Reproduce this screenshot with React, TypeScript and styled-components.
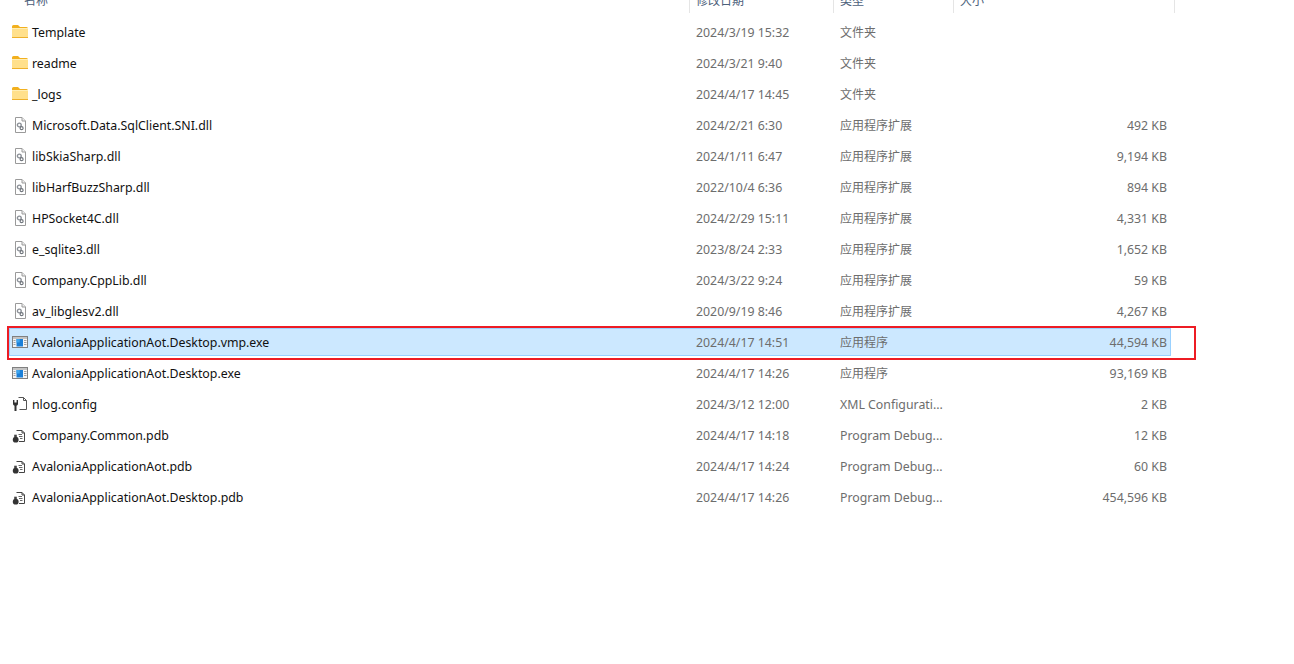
import React from "react";
import styled, { createGlobalStyle } from "styled-components";

const Global = createGlobalStyle`
  html, body { margin: 0; padding: 0; background: #fff; }
  body { font-family: "Noto Sans", "Noto Sans CJK SC", sans-serif; font-size: 12.33px; }
`;

const Page = styled.div`
  position: relative;
  width: 1294px;
  height: 664px;
  overflow: hidden;
  background: #fff;
`;

const Header = styled.div`
  display: flex;
  height: 13px;
  overflow: hidden;
  align-items: flex-end;
`;

const HeaderCell = styled.div<{ $w: number; $pad?: number; $sep?: boolean }>`
  width: ${(p) => p.$w}px;
  height: 13px;
  flex: none;
  box-sizing: border-box;
  padding-left: ${(p) => p.$pad ?? 6}px;
  border-right: ${(p) => (p.$sep ? "1px solid #e5e5e5" : "none")};
  display: flex;
  align-items: flex-end;
  overflow: hidden;
  color: #4c607a;
  font-family: "Noto Sans CJK SC", sans-serif;
  font-size: 12px;
  line-height: 18px;
  & > span { display: block; padding-bottom: 4px; flex: none; }
`;

const List = styled.div`
  display: flex;
  flex-direction: column;
  gap: 3px;
  padding: 5px 0 0 9px;
  width: 1162px;
`;

const Row = styled.div<{ $sel?: boolean }>`
  display: grid;
  grid-template-columns: 680px 144px 240px 1fr;
  align-items: center;
  height: 28px;
  box-sizing: border-box;
  border: 1px solid ${(p) => (p.$sel ? "#99d1ff" : "transparent")};
  background: ${(p) => (p.$sel ? "#cce8ff" : "transparent")};
  color: #6d6d6d;
`;

const NameCell = styled.div`
  display: flex;
  align-items: center;
  padding-left: 2px;
  color: #111;
  white-space: nowrap;
`;

const IconBox = styled.span`
  width: 16px;
  height: 16px;
  flex: none;
  margin-right: 4px;
  display: block;
  & > svg { display: block; }
`;

const TextCell = styled.div<{ $cjk?: boolean }>`
  padding-left: 6px;
  white-space: nowrap;
  overflow: hidden;
  font-size: ${(p) => (p.$cjk ? "12px" : "inherit")};
`;

const SizeCell = styled.div`
  text-align: right;
  padding-right: 3px;
  white-space: nowrap;
`;

const Highlight = styled.div`
  position: absolute;
  left: 7px;
  top: 326px;
  width: 1189px;
  height: 34px;
  box-sizing: border-box;
  border: 2px solid #ed1c24;
  pointer-events: none;
`;

const Svg = ({ children }: { children: React.ReactNode }) => (
  <svg width="16" height="16" viewBox="0 0 16 16">{children}</svg>
);

const FolderIcon = () => (
  <Svg>
    <path d="M0 2.5 Q0 1 1.5 1 H6 L8 3 H14.5 Q16 3 16 4.5 V6 H0Z" fill="#f2b01e" />
    <path d="M0 4.5 H16 V13 Q16 14 15 14 H1 Q0 14 0 13Z" fill="#ffe08c" />
    <rect x="0" y="13" width="16" height="1" fill="#eeb02c" />
    <rect x="0" y="4" width="16" height="1" fill="#ffeeb5" />
  </Svg>
);

const DllIcon = () => (
  <Svg>
    <path d="M3.5 .5 H10 L13.5 4 V15.5 H3.5Z" fill="#fff" stroke="#9a9a9a" />
    <path d="M10 .5 V4 H13.5" fill="#eee" stroke="#9a9a9a" />
    <circle cx="7.3" cy="8" r="1.9" fill="none" stroke="#8a8f96" strokeWidth="1.4" />
    <circle cx="9.6" cy="11.2" r="1.5" fill="none" stroke="#70757c" strokeWidth="1.2" />
  </Svg>
);

const ExeIcon = () => (
  <Svg>
    <rect x="0.5" y="2.5" width="15" height="11" fill="#f4f4f4" stroke="#808080" />
    <rect x="1" y="3" width="14" height="2" fill="#c4c4c4" />
    <rect x="4.5" y="5" width="6.5" height="7.5" fill="#1a7fd8" />
    <rect x="4.5" y="5" width="3.2" height="3.5" fill="#3fa5ee" />
    <path d="M12 6.5h2.5M12 8.5h2.5M12 10.5h2.5M1.5 6.5h2M1.5 8.5h2M1.5 10.5h2" stroke="#a0a0a0" />
  </Svg>
);

const ConfigIcon = () => (
  <Svg>
    <path d="M6.5 1.5 H11.5 L14.5 4.5 V13.5 H7.5" fill="#fff" stroke="#555" />
    <path d="M11.5 1.5 V4.5 H14.5" fill="none" stroke="#555" />
    <path d="M1 4 H2.4 V6.5 H4.6 V4 H6 V8 Q6 9.3 4.5 9.7 V15 H2.5 V9.7 Q1 9.3 1 8Z" fill="#333" />
  </Svg>
);

const PdbIcon = () => (
  <Svg>
    <path d="M4.5 3.5 H10 L12.5 6 V14.5 H7" fill="#fff" stroke="#444" />
    <path d="M10 3.5 V6 H12.5" fill="none" stroke="#444" />
    <path d="M6.5 7.5h3.5M7 9.5h3.5M8 11.5h2.5" stroke="#666" />
    <circle cx="3.7" cy="12.7" r="2.9" fill="#333" />
    <rect x="2.2" y="7.7" width="2.6" height="2.4" fill="#444" />
  </Svg>
);

const icons = { folder: FolderIcon, dll: DllIcon, exe: ExeIcon, config: ConfigIcon, pdb: PdbIcon };
type Kind = keyof typeof icons;

const rows: { k: Kind; n: string; d: string; t: string; s: string; sel?: boolean; cjk?: boolean }[] = [
  { k: "folder", n: "Template", d: "2024/3/19 15:32", t: "文件夹", s: "", cjk: true },
  { k: "folder", n: "readme", d: "2024/3/21 9:40", t: "文件夹", s: "", cjk: true },
  { k: "folder", n: "_logs", d: "2024/4/17 14:45", t: "文件夹", s: "", cjk: true },
  { k: "dll", n: "Microsoft.Data.SqlClient.SNI.dll", d: "2024/2/21 6:30", t: "应用程序扩展", s: "492 KB", cjk: true },
  { k: "dll", n: "libSkiaSharp.dll", d: "2024/1/11 6:47", t: "应用程序扩展", s: "9,194 KB", cjk: true },
  { k: "dll", n: "libHarfBuzzSharp.dll", d: "2022/10/4 6:36", t: "应用程序扩展", s: "894 KB", cjk: true },
  { k: "dll", n: "HPSocket4C.dll", d: "2024/2/29 15:11", t: "应用程序扩展", s: "4,331 KB", cjk: true },
  { k: "dll", n: "e_sqlite3.dll", d: "2023/8/24 2:33", t: "应用程序扩展", s: "1,652 KB", cjk: true },
  { k: "dll", n: "Company.CppLib.dll", d: "2024/3/22 9:24", t: "应用程序扩展", s: "59 KB", cjk: true },
  { k: "dll", n: "av_libglesv2.dll", d: "2020/9/19 8:46", t: "应用程序扩展", s: "4,267 KB", cjk: true },
  { k: "exe", n: "AvaloniaApplicationAot.Desktop.vmp.exe", d: "2024/4/17 14:51", t: "应用程序", s: "44,594 KB", sel: true, cjk: true },
  { k: "exe", n: "AvaloniaApplicationAot.Desktop.exe", d: "2024/4/17 14:26", t: "应用程序", s: "93,169 KB", cjk: true },
  { k: "config", n: "nlog.config", d: "2024/3/12 12:00", t: "XML Configurati...", s: "2 KB" },
  { k: "pdb", n: "Company.Common.pdb", d: "2024/4/17 14:18", t: "Program Debug...", s: "12 KB" },
  { k: "pdb", n: "AvaloniaApplicationAot.pdb", d: "2024/4/17 14:24", t: "Program Debug...", s: "60 KB" },
  { k: "pdb", n: "AvaloniaApplicationAot.Desktop.pdb", d: "2024/4/17 14:26", t: "Program Debug...", s: "454,596 KB" },
];

export default function App() {
  return (
    <Page>
      <Global />
      <Header>
        <HeaderCell $w={690} $pad={24} $sep><span>名称</span></HeaderCell>
        <HeaderCell $w={144} $sep><span>修改日期</span></HeaderCell>
        <HeaderCell $w={120} $sep><span>类型</span></HeaderCell>
        <HeaderCell $w={221} $sep><span>大小</span></HeaderCell>
      </Header>
      <List>
        {rows.map((r) => {
          const Icon = icons[r.k];
          return (
            <Row key={r.n} $sel={r.sel}>
              <NameCell>
                <IconBox><Icon /></IconBox>
                {r.n}
              </NameCell>
              <TextCell>{r.d}</TextCell>
              <TextCell $cjk={r.cjk}>{r.t}</TextCell>
              <SizeCell>{r.s}</SizeCell>
            </Row>
          );
        })}
      </List>
      <Highlight />
    </Page>
  );
}
